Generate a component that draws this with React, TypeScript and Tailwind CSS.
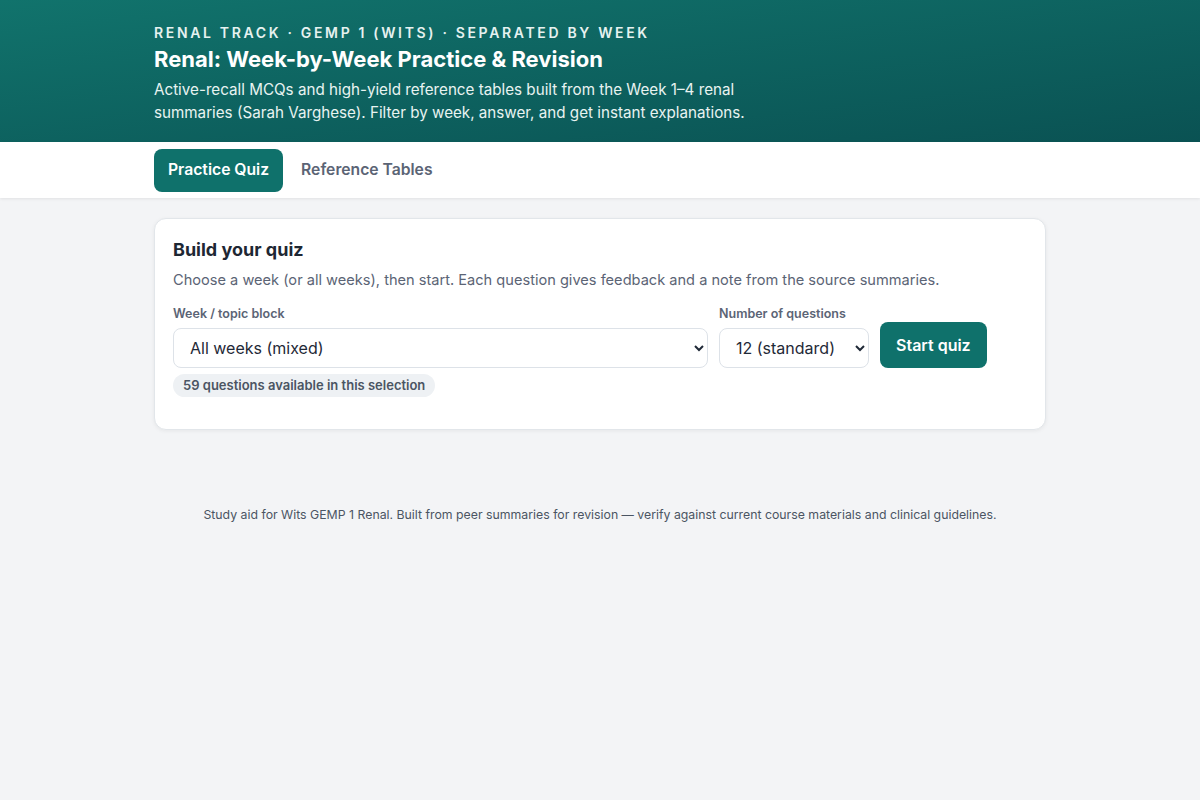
import { useState } from "react";

const weeks = [
  { value: "all", label: "All weeks (mixed)", count: 59 },
  { value: "w1", label: "Week 1", count: 15 },
  { value: "w2", label: "Week 2", count: 14 },
  { value: "w3", label: "Week 3", count: 16 },
  { value: "w4", label: "Week 4", count: 14 },
];

const sizes = [
  { value: "6", label: "6 (quick)" },
  { value: "12", label: "12 (standard)" },
  { value: "20", label: "20 (long)" },
];

const App = () => {
  const [tab, setTab] = useState("quiz");
  const [week, setWeek] = useState("all");
  const [size, setSize] = useState("12");
  const count = weeks.find((w) => w.value === week)?.count ?? 0;

  return (
    <div className="min-h-screen bg-[#f3f4f6] font-['Inter','Noto_Sans',sans-serif] text-[#1f2937]">
      <header className="bg-gradient-to-br from-[#11736c] to-[#0a5253] text-white">
        <div className="mx-auto max-w-[892px] pt-[24px] pb-[18px]">
          <p className="text-[14px] font-semibold uppercase leading-[18px] tracking-[0.19em] text-[#e6f2f0]">
            Renal Track · GEMP 1 (Wits) · Separated by Week
          </p>
          <h1 className="mt-[3px] text-[22px] font-bold leading-[28px]">
            Renal: Week-by-Week Practice &amp; Revision
          </h1>
          <p className="mt-[5px] max-w-[610px] text-[15.2px] leading-[23px] text-[#e8f3f1]">
            Active-recall MCQs and high-yield reference tables built from the Week 1–4 renal
            summaries (Sarah Varghese). Filter by week, answer, and get instant explanations.
          </p>
        </div>
      </header>

      <nav className="bg-white shadow-[0_1px_3px_rgba(0,0,0,0.08)]">
        <div className="mx-auto flex h-[56px] max-w-[892px] items-center gap-[4px]">
          <button
            onClick={() => setTab("quiz")}
            className={`h-[43px] rounded-[8px] px-[14px] text-[15.7px] font-semibold ${
              tab === "quiz" ? "bg-[#0f716b] text-white" : "text-[#5b6475]"
            }`}
          >
            Practice Quiz
          </button>
          <button
            onClick={() => setTab("tables")}
            className={`h-[43px] rounded-[8px] px-[14px] text-[15.7px] font-semibold ${
              tab === "tables" ? "bg-[#0f716b] text-white" : "text-[#5b6475]"
            }`}
          >
            Reference Tables
          </button>
        </div>
      </nav>

      <main className="mx-auto max-w-[892px] pt-[20px]">
        <section className="rounded-[12px] border border-[#e2e6ea] bg-white px-[18px] pt-[19px] pb-[32px] shadow-[0_1px_4px_rgba(0,0,0,0.06)]">
          <h2 className="text-[18px] font-bold leading-[24px] text-[#1e2733]">Build your quiz</h2>
          <p className="mt-[8px] text-[14.6px] leading-[20px] text-[#5b6475]">
            Choose a week (or all weeks), then start. Each question gives feedback and a note from
            the source summaries.
          </p>

          <div className="mt-[16px] flex items-end gap-[11px]">
            <label className="flex w-[535px] flex-col">
              <span className="mb-[6px] text-[12.5px] font-semibold leading-[16px] text-[#5b6475]">
                Week / topic block
              </span>
              <select
                value={week}
                onChange={(e) => setWeek(e.target.value)}
                className="h-[40px] rounded-[8px] border border-[#dde2e8] bg-white px-[12px] text-[16px] text-[#1f2937]"
              >
                {weeks.map((w) => (
                  <option key={w.value} value={w.value}>
                    {w.label}
                  </option>
                ))}
              </select>
            </label>
            <label className="flex w-[150px] flex-col">
              <span className="mb-[6px] text-[12.5px] font-semibold leading-[16px] text-[#5b6475]">
                Number of questions
              </span>
              <select
                value={size}
                onChange={(e) => setSize(e.target.value)}
                className="h-[40px] rounded-[8px] border border-[#dde2e8] bg-white px-[12px] text-[16px] text-[#1f2937]"
              >
                {sizes.map((s) => (
                  <option key={s.value} value={s.value}>
                    {s.label}
                  </option>
                ))}
              </select>
            </label>
            <button className="h-[46px] rounded-[8px] bg-[#0f716b] px-[16px] text-[16px] font-semibold text-white">
              Start quiz
            </button>
          </div>

          <span className="mt-[6px] inline-block rounded-full bg-[#eef1f4] px-[10px] py-[3px] text-[13px] font-semibold leading-[17px] text-[#4b5563]">
            {count} questions available in this selection
          </span>
        </section>

        <footer className="mt-[76px] text-center text-[12.3px] leading-[18px] text-[#4b5563]">
          Study aid for Wits GEMP 1 Renal. Built from peer summaries for revision — verify against
          current course materials and clinical guidelines.
        </footer>
      </main>
    </div>
  );
};

export default App;
